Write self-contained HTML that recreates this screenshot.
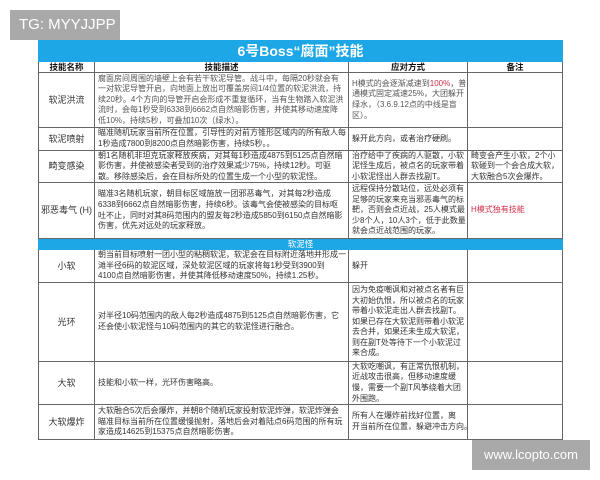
<!DOCTYPE html>
<html><head><meta charset="utf-8"><style>
*{margin:0;padding:0;box-sizing:border-box}
body{width:600px;height:480px;background:#fff;position:relative;overflow:hidden;font-family:"Liberation Sans","Noto Sans CJK SC",sans-serif;color:#333}
.tg{position:absolute;left:10px;top:10px;width:110px;height:30px;background:#a9a9a9;color:#fff;font-size:15px;line-height:30px;padding-left:9px;white-space:nowrap}
.wm{position:absolute;left:472px;top:440px;width:118px;height:30px;background:#a9a9a9;color:#fff;font-size:13px;line-height:30px;text-align:center}
.c{position:absolute;border-right:1px solid #666;border-bottom:1px solid #666;font-size:8px;line-height:10.6px;display:flex;align-items:center;padding-left:3px;overflow:hidden;white-space:nowrap}
.f{border-left:1px solid #666}
.n{justify-content:center;padding-left:0;font-size:9px}
.h{position:absolute;background:#1ea7e6;color:#fff;text-align:center}
.b{font-weight:bold;justify-content:center;padding-left:0;font-size:8.5px;color:#111}
.r{color:#d0304a}
</style></head><body>
<div class="tg">TG: MYYJJPP</div>
<div class="h" style="left:38px;top:40px;width:525px;height:22px;font-size:14px;line-height:22px;font-weight:bold">6号Boss“腐面”技能</div>

<div class="c b f" style="left:38px;top:62px;width:57px;height:11px">技能名称</div>
<div class="c b" style="left:95px;top:62px;width:254px;height:11px">技能描述</div>
<div class="c b" style="left:349px;top:62px;width:119px;height:11px">应对方式</div>
<div class="c b" style="left:468px;top:62px;width:95px;height:11px">备注</div>

<div class="c n f" style="left:38px;top:73px;width:57px;height:55px">软泥洪流</div>
<div class="c" style="left:95px;top:73px;width:254px;height:55px;color:#555"><div>腐面房间周围的墙壁上会有若干软泥导管。战斗中，每隔20秒就会有<br>一对软泥导管开启，向地面上放出可覆盖房间1/4位置的软泥洪流，持<br>续20秒。4个方向的导管开启会形成不重复循环，当有生物踏入软泥洪<br>流时，会每1秒受到6338到6662点自然暗影伤害，并使其移动速度降<br>低10%，持续5秒，可叠加10次（绿水）。</div></div>
<div class="c" style="left:349px;top:73px;width:119px;height:55px;color:#555"><div>H模式的会逐渐减速到<span class="r">100%</span>，普<br>通模式固定减速25%，大团躲开<br>绿水，（3.6.9.12点的中线是盲<br>区）。</div></div>
<div class="c" style="left:468px;top:73px;width:95px;height:55px"></div>

<div class="c n f" style="left:38px;top:128px;width:57px;height:23px">软泥喷射</div>
<div class="c" style="left:95px;top:128px;width:254px;height:23px"><div>瞄准随机玩家当前所在位置，引导性的对前方锥形区域内的所有敌人每<br>1秒造成7800到8200点自然暗影伤害，持续5秒。。</div></div>
<div class="c" style="left:349px;top:128px;width:119px;height:23px"><div>躲开此方向，或者治疗硬刷。</div></div>
<div class="c" style="left:468px;top:128px;width:95px;height:23px"></div>

<div class="c n f" style="left:38px;top:151px;width:57px;height:32px">畸变感染</div>
<div class="c" style="left:95px;top:151px;width:254px;height:32px"><div>朝1名随机非坦克玩家释放疾病，对其每1秒造成4875到5125点自然暗<br>影伤害，并使被感染者受到的治疗效果减少75%，持续12秒。可驱<br>散。移除感染后，会在目标所处的位置生成一个小型的软泥怪。</div></div>
<div class="c" style="left:349px;top:151px;width:119px;height:32px"><div>治疗给中了疾病的人驱散，小软<br>泥怪生成后，被点名的玩家带着<br>小软泥怪出人群去找副T。</div></div>
<div class="c" style="left:468px;top:151px;width:95px;height:32px"><div>畸变会产生小软，2个小<br>软碰到一个会合成大软，<br>大软融合5次会爆炸。</div></div>

<div class="c n f" style="left:38px;top:183px;width:57px;height:56px">邪恶毒气 (H)</div>
<div class="c" style="left:95px;top:183px;width:254px;height:56px"><div>瞄准3名随机玩家，朝目标区域施放一团邪恶毒气，对其每2秒造成<br>6338到6662点自然暗影伤害，持续6秒。该毒气会使被感染的目标呕<br>吐不止，同时对其8码范围内的盟友每2秒造成5850到6150点自然暗影<br>伤害，优先对远处的玩家释放。</div></div>
<div class="c" style="left:349px;top:183px;width:119px;height:56px"><div>远程保持分散站位，远处必须有<br>足够的玩家来充当邪恶毒气的标<br>靶，否则会点近战，25人模式最<br>少8个人，10人3个，低于此数量<br>就会点近战范围的玩家。</div></div>
<div class="c r" style="left:468px;top:183px;width:95px;height:56px">H模式独有技能</div>

<div class="h" style="left:38px;top:239px;width:525px;height:11px;font-size:8.5px;line-height:11px">软泥怪</div>

<div class="c n f" style="left:38px;top:250px;width:57px;height:33px">小软</div>
<div class="c" style="left:95px;top:250px;width:254px;height:33px"><div>朝当前目标喷射一团小型的粘稠软泥，软泥会在目标附近落地并形成一<br>滩半径6码的软泥区域，深处软泥区域的玩家将每1秒受到3900到<br>4100点自然暗影伤害，并使其降低移动速度50%，持续1.25秒。</div></div>
<div class="c" style="left:349px;top:250px;width:119px;height:33px">躲开</div>
<div class="c" style="left:468px;top:250px;width:95px;height:33px"></div>

<div class="c n f" style="left:38px;top:283px;width:57px;height:79px">光环</div>
<div class="c" style="left:95px;top:283px;width:254px;height:79px"><div>对半径10码范围内的敌人每2秒造成4875到5125点自然暗影伤害，它<br>还会使小软泥怪与10码范围内的其它的软泥怪进行融合。</div></div>
<div class="c" style="left:349px;top:283px;width:119px;height:79px"><div>因为免疫嘲讽和对被点名者有巨<br>大初始仇恨，所以被点名的玩家<br>带着小软泥走出人群去找副T。<br>如果已存在大软泥则带着小软泥<br>去合并，如果还未生成大软泥，<br>则在副T处等待下一个小软泥过<br>来合成。</div></div>
<div class="c" style="left:468px;top:283px;width:95px;height:79px"></div>

<div class="c n f" style="left:38px;top:362px;width:57px;height:43px">大软</div>
<div class="c" style="left:95px;top:362px;width:254px;height:43px">技能和小软一样，光环伤害略高。</div>
<div class="c" style="left:349px;top:362px;width:119px;height:43px"><div>大软吃嘲讽，有正常仇恨机制，<br>近战攻击很高，但移动速度缓<br>慢，需要一个副T风筝绕着大团<br>外围跑。</div></div>
<div class="c" style="left:468px;top:362px;width:95px;height:43px"></div>

<div class="c n f" style="left:38px;top:405px;width:57px;height:35px">大软爆炸</div>
<div class="c" style="left:95px;top:405px;width:254px;height:35px"><div>大软融合5次后会爆炸，并朝8个随机玩家投射软泥炸弹，软泥炸弹会<br>瞄准目标当前所在位置缓慢抛射，落地后会对着陆点6码范围的所有玩<br>家造成14625到15375点自然暗影伤害。</div></div>
<div class="c" style="left:349px;top:405px;width:119px;height:35px"><div>所有人在爆炸前找好位置，离<br>开当前所在位置，躲避冲击方向。</div></div>
<div class="c" style="left:468px;top:405px;width:95px;height:35px"></div>

<div class="wm">www.lcopto.com</div>
</body></html>
